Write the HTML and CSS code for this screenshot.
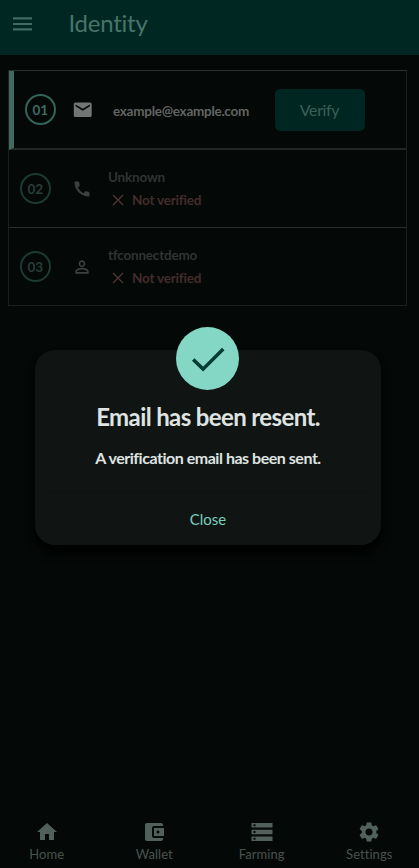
FILE: index.html
```html
<!DOCTYPE html>
<html lang="en">
<head>
<meta charset="utf-8">
<title>Identity</title>
<link rel="stylesheet" href="styles.css">
</head>
<body>
<div class="app">
  <header class="topbar">
    <svg class="menu" viewBox="0 0 24 24"><path d="M3 6.300h19M3 12h19M3 17.300h19"/></svg>
    <h1>Identity</h1>
  </header>
  <main class="steps">
    <section class="step active">
      <span class="num">01</span>
      <svg class="icon" viewBox="0 0 24 24"><path d="M20 4H4c-1.1 0-2 .9-2 2v12c0 1.100.9 2 2 2h16c1.100 0 2-.9 2-2V6c0-1.100-.9-2-2-2zm0 4-8 5-8-5V6l8 5 8-5v2z"/></svg>
      <span class="email">example@example.com</span>
      <button class="verify">Verify</button>
    </section>
    <section class="step">
      <span class="num">02</span>
      <svg class="icon" viewBox="0 0 24 24"><path d="M20.010 15.380c-1.230 0-2.420-.2-3.530-.56-.35-.12-.74-.03-1.010.24l-1.570 1.970c-2.830-1.350-5.480-3.900-6.890-6.830l1.950-1.660c.27-.28.35-.67.24-1.020-.37-1.110-.56-2.300-.56-3.530 0-.54-.45-.99-.99-.99H4.190C3.650 3 3 3.240 3 3.990 3 13.280 10.730 21 20.010 21c.71 0 .99-.63.99-1.180v-3.450c0-.54-.45-.99-.99-.99z"/></svg>
      <div class="info">
        <span class="name">Unknown</span>
        <span class="status"><svg viewBox="0 0 12 12"><path d="M1 1l10 10M11 1L1 11"/></svg>Not verified</span>
      </div>
    </section>
    <section class="step">
      <span class="num">03</span>
      <svg class="icon" viewBox="0 0 24 24"><path d="M12 5.900c1.160 0 2.100.94 2.100 2.100s-.94 2.100-2.100 2.100S9.900 9.160 9.900 8s.94-2.100 2.100-2.100m0 9c2.970 0 6.100 1.460 6.100 2.100v1.100H5.900V17c0-.64 3.130-2.100 6.100-2.100M12 4C9.790 4 8 5.790 8 8s1.790 4 4 4 4-1.790 4-4-1.790-4-4-4zm0 9c-2.670 0-8 1.340-8 4v3h16v-3c0-2.660-5.330-4-8-4z"/></svg>
      <div class="info">
        <span class="name">tfconnectdemo</span>
        <span class="status"><svg viewBox="0 0 12 12"><path d="M1 1l10 10M11 1L1 11"/></svg>Not verified</span>
      </div>
    </section>
  </main>
  <nav class="tabs">
    <a class="tab"><svg viewBox="0 0 24 24"><path d="M10 20v-6h4v6h5v-8h3L12 3 2 12h3v8z"/></svg><span>Home</span></a>
    <a class="tab"><svg viewBox="0 0 24 24"><path d="M21 18v1c0 1.100-.9 2-2 2H5c-1.110 0-2-.9-2-2V5c0-1.100.89-2 2-2h14c1.100 0 2 .9 2 2v1h-9c-1.110 0-2 .9-2 2v8c0 1.100.89 2 2 2h9zm-9-2h10V8H12v8zm4-2.500c-.83 0-1.500-.67-1.500-1.500s.67-1.500 1.500-1.500 1.500.67 1.500 1.500-.67 1.500-1.500 1.500z"/></svg><span>Wallet</span></a>
    <a class="tab"><svg viewBox="0 0 24 24"><path d="M1.500 21h21v-4.500h-21V21zm2-3.200h2v2h-2v-2zM1.500 3v4.500h21V3h-21zm4 3.200h-2v-2h2v2zm-4 8.100h21V9.700h-21v4.600zm2-3.300h2v2h-2v-2z"/></svg><span>Farming</span></a>
    <a class="tab"><svg viewBox="0 0 24 24"><path d="M19.140 12.940c.04-.3.060-.61.060-.94 0-.32-.02-.64-.07-.94l2.030-1.580c.18-.14.23-.41.12-.61l-1.920-3.320c-.12-.22-.37-.29-.59-.22l-2.390.96c-.5-.38-1.030-.7-1.620-.94l-.36-2.540c-.04-.24-.24-.41-.48-.41h-3.840c-.24 0-.43.17-.47.41l-.36 2.540c-.59.24-1.130.57-1.620.94l-2.390-.96c-.22-.08-.47 0-.59.22L2.740 8.870c-.12.21-.08.47.12.61l2.030 1.580c-.05.3-.09.63-.09.94s.02.64.07.94l-2.030 1.580c-.18.14-.23.41-.12.61l1.920 3.320c.12.22.37.29.59.22l2.390-.96c.5.38 1.030.7 1.620.94l.36 2.540c.05.24.24.41.48.41h3.840c.24 0 .44-.17.47-.41l.36-2.540c.59-.24 1.130-.56 1.620-.94l2.390.96c.22.08.47 0 .59-.22l1.920-3.320c.12-.22.07-.47-.12-.61l-2.010-1.580zM12 15.600c-1.980 0-3.600-1.620-3.600-3.600s1.620-3.600 3.600-3.600 3.600 1.620 3.600 3.600-1.620 3.600-3.600 3.600z"/></svg><span>Settings</span></a>
  </nav>
  <div class="dialog" role="dialog">
    <div class="badge"><svg viewBox="0 0 64 64"><path d="M17.500 33l10 9.800L48 22.300"/></svg></div>
    <h2>Email has been resent.</h2>
    <p>A verification email has been sent.</p>
    <button class="close">Close</button>
  </div>
</div>
</body>
</html>
```
FILE: styles.css
```css
* { box-sizing: border-box; }
body { margin: 0; background: #040807; font-family: Lato, sans-serif; font-variant-ligatures: none; }
button { border: 0; padding: 0; font-family: inherit; }
.app { position: relative; height: 868px; display: flex; flex-direction: column; overflow: hidden; }
.topbar { height: 54.500px; flex: none; display: flex; align-items: center; background: #002722; padding: 0 0 7px 9.500px; }
.menu { width: 24px; height: 24px; stroke: #3f6b61; stroke-width: 2.200; fill: none; }
h1 { margin: -1px 0 0 35px; font-size: 24px; line-height: 30px; font-weight: 400; letter-spacing: -.25px; color: #47756a; }
.steps { flex: none; margin: 15.500px 12px 0 8px; height: 236px; border: 1px solid #1b1f1e; border-top-color: #2b302e; }
.step { height: 78px; display: flex; align-items: center; padding: 0 0 0 10.500px; border-bottom: 1px solid #2b2e2d; }
.step:last-child { border-bottom: 0; padding-bottom: 1px; }
.step.active { border-left: 5px solid #42695f; border-bottom: 2px solid #222625; height: 79px; }
.num { width: 31.500px; height: 31.500px; flex: none; border: 2px solid #1c3932; border-radius: 50%; text-align: center; line-height: 29px; font-size: 13.500px; font-weight: 700; letter-spacing: -.2px; color: #263f39; }
.active .num { border-color: #346459; color: #3d6c61; }
.icon { width: 20px; height: 20px; flex: none; margin-left: 21px; fill: #3c403f; }
.active .icon { margin-left: 15.500px; fill: #737574; width: 21.500px; height: 21.500px; }
.email { width: 136px; margin: 2px 0 0 20px; font-size: 13.500px; font-weight: 700; letter-spacing: -.27px; color: #626463; white-space: nowrap; }
.verify { width: 90px; height: 42px; margin-left: 25.500px; border-radius: 5px; background: #002621; color: #366258; font-size: 16px; letter-spacing: -.35px; }
.info { margin-left: 16px; display: flex; flex-direction: column; font-size: 13.500px; font-weight: 700; letter-spacing: -.2px; line-height: 22.500px; color: #303433; }
.status { display: flex; align-items: center; color: #432c2b; padding-left: 4px; }
.status svg { width: 12px; height: 12px; margin-right: 8px; stroke: #523432; stroke-width: 1.300; fill: none; }
.tabs { margin-top: auto; height: 50px; flex: none; margin-left: -7px; display: grid; grid-template-columns: repeat(4, 107.500px); }
.tab { display: flex; flex-direction: column; align-items: center; font-size: 13px; line-height: 16px; letter-spacing: .05px; color: #48534f; padding-top: 2px; }
.tab svg { width: 24px; height: 24px; fill: #51605b; margin-bottom: 2px; }
.dialog { position: absolute; left: 35px; top: 350px; width: 346px; height: 194.500px; border-radius: 20px; background: #101514; box-shadow: 0 8px 10px #000; display: flex; flex-direction: column; align-items: center; }
.badge { position: absolute; top: -23.500px; left: 141.400px; width: 63px; height: 63px; border-radius: 50%; background: #84d6c5; }
.badge svg { display: block; width: 63px; height: 63px; fill: none; stroke: #003b34; stroke-width: 3.600; }
h2 { margin: 52px 0 0; font-size: 24px; line-height: 30px; font-weight: 700; letter-spacing: -.62px; color: #dfe3e1; white-space: nowrap; }
p { margin: 15px 0 0; font-size: 16px; line-height: 22px; font-weight: 700; letter-spacing: -.47px; color: #dfe3e1; white-space: nowrap; }
.close { width: 320px; margin-top: 23px; padding-top: 16px; border-top: 1px solid #0d1211; background: none; color: #7acdbc; font-size: 15px; line-height: 20px; }
```
